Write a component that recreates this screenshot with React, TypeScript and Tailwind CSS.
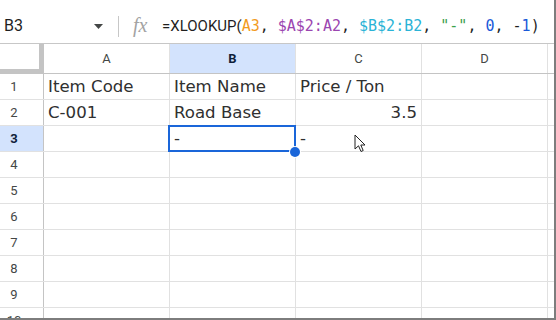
import React from "react";

const cols = ["A", "B", "C", "D"];

function Cell({
  children,
  align = "left",
}: {
  children?: React.ReactNode;
  align?: "left" | "right";
}) {
  return (
    <div
      className={
        "w-[126px] shrink-0 h-full border-r border-[#e1e1e1] flex items-center px-[4px] pt-[2px] text-[16.6px] text-[#303030] whitespace-nowrap overflow-visible " +
        (align === "right" ? "justify-end" : "justify-start")
      }
      style={{ fontFamily: '"DejaVu Sans", Verdana, sans-serif' }}
    >
      {children}
    </div>
  );
}

export default function App() {
  const data: Record<number, (string | null)[]> = {
    1: ["Item Code", "Item Name", "Price / Ton", null],
    2: ["C-001", "Road Base", "3.5", null],
    3: [null, "-", "-", null],
  };
  const rows = [1, 2, 3, 4, 5, 6, 7, 8, 9, 10];
  const mono = { fontFamily: '"DejaVu Sans Mono", "Liberation Mono", monospace' };

  return (
    <div className="relative w-[556px] h-[320px] overflow-hidden bg-white border-r-2 border-b-2 border-[#7d7d7d]">
      {/* formula bar */}
      <div className="flex h-[44px] items-center border-b border-[#c7c7c7] pt-[9px] bg-white">
        <div className="w-[118px] flex items-center justify-between pl-[4px] pr-[15px]">
          <span
            className="text-[16px] text-[#1f1f1f]"
            style={{ fontFamily: "Roboto, Arial, sans-serif" }}
          >
            B3
          </span>
          <svg width="9" height="5" viewBox="0 0 9 5">
            <path d="M0 0 L9 0 L4.5 5 Z" fill="#444746" />
          </svg>
        </div>
        <div className="w-px h-[21px] bg-[#c7c7c7]" />
        <span
          className="ml-[14px] w-[20px] text-[20px] italic text-[#a3a3a3] leading-none -mt-[2px]"
          style={{ fontFamily: '"Liberation Serif", "DejaVu Serif", serif' }}
        >
          fx
        </span>
        <div className="ml-[9px] text-[15px] text-[#1f1f1f] whitespace-nowrap flex items-center">
          <span style={{ fontFamily: "Roboto, Arial, sans-serif" }}>=XLOOKUP(</span>
          <span style={mono}>
            <span className="text-[#f29b1d]">A3</span>
            <span>, </span>
            <span className="text-[#9b46b0]">$A$2:A2</span>
            <span>, </span>
            <span className="text-[#2bb3d6]">$B$2:B2</span>
            <span>, </span>
            <span className="text-[#3aa14c]">"-"</span>
            <span>, </span>
            <span className="text-[#1a5ad8]">0</span>
            <span>, -</span>
            <span className="text-[#1a5ad8]">1</span>
            <span>)</span>
          </span>
        </div>
      </div>

      {/* column headers */}
      <div className="flex h-[30px] border-b border-[#c4c4c4]">
        <div className="w-[44px] shrink-0 h-full border-r-[5px] border-b-[4px] border-[#c4c4c4] bg-white" />
        {cols.map((c) => (
          <div
            key={c}
            className={
              "w-[126px] shrink-0 h-full border-r border-[#e1e1e1] flex items-center justify-center text-[13px] " +
              (c === "B"
                ? "bg-[#d3e3fd] font-bold text-[#0f1f3a]"
                : "bg-white text-[#444746]")
            }
            style={{ fontFamily: "Roboto, Arial, sans-serif" }}
          >
            {c}
          </div>
        ))}
        <div className="flex-1" />
      </div>

      {/* rows */}
      {rows.map((r) => (
        <div key={r} className="flex h-[26px] border-b border-[#e1e1e1]">
          <div
            className={
              "w-[44px] shrink-0 h-full border-r border-[#c4c4c4] flex items-center text-[13px] " +
              (r === 3 ? "bg-[#d3e3fd] font-bold text-[#0f1f3a]" : "bg-white text-[#444746]")
            }
            style={{ fontFamily: "Roboto, Arial, sans-serif" }}
          >
            <span className="w-[28px] text-center">{r}</span>
          </div>
          {cols.map((c, i) => (
            <Cell key={c} align={r === 2 && i === 2 ? "right" : "left"}>
              {data[r]?.[i] ?? ""}
            </Cell>
          ))}
          <div className="flex-1" />
        </div>
      ))}

      {/* selection */}
      <div className="absolute left-[168px] top-[125px] w-[128px] h-[27px] border-2 border-[#1a66d9]" />
      <div className="absolute left-[290px] top-[147px] w-[10px] h-[10px] rounded-full bg-[#1a66d9] ring-1 ring-white" />

      {/* mouse cursor */}
      <svg
        className="absolute left-[354px] top-[134px]"
        width="13"
        height="20"
        viewBox="0 0 13 20"
      >
        <path
          d="M1 1 L1 15 L4.5 11.8 L7 17.5 L9.2 16.5 L6.8 11 L11 11 Z"
          fill="white"
          stroke="#222"
          strokeWidth="1"
          strokeLinejoin="round"
        />
      </svg>
    </div>
  );
}
